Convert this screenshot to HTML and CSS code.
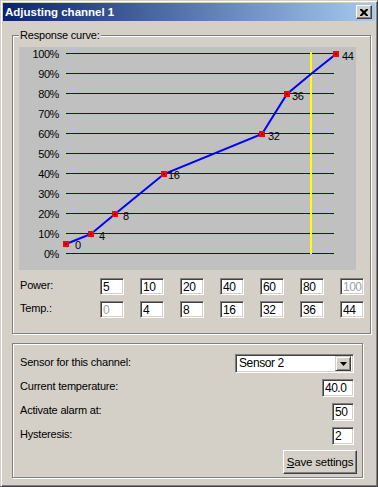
FILE: index.html
```html
<!DOCTYPE html>
<html lang="en">
<head>
  <meta charset="UTF-8">
  <title>Adjusting channel 1</title>
  <link rel="stylesheet" href="styles.css">
</head>
<body>
  <div class="window">
    <div class="titlebar">
      <span class="title">Adjusting channel 1</span>
      <button class="close">
        <svg width="8" height="7" viewBox="0 0 8 7"><path d="M0 0h2l2 2 2-2h2v1l-2.5 2.5 2.5 2.5v1h-2l-2-2-2 2h-2v-1l2.5-2.5-2.5-2.5z" fill="#000"/></svg>
      </button>
    </div>

    <div class="content">
      <fieldset class="group curve-group">
        <legend>Response curve:</legend>

        <svg class="chart" width="337" height="223" viewBox="0 0 337 223">
          <rect width="337" height="223" fill="#c0c0c0"/>
          <g class="grid" stroke="#0000d0" stroke-width="1" shape-rendering="crispEdges">
            <line x1="47" y1="6.5" x2="315" y2="6.5"/>
            <line x1="47" y1="26.5" x2="315" y2="26.5"/>
            <line x1="47" y1="46.5" x2="315" y2="46.5"/>
            <line x1="47" y1="66.5" x2="315" y2="66.5"/>
            <line x1="47" y1="86.5" x2="315" y2="86.5"/>
            <line x1="47" y1="106.5" x2="315" y2="106.5"/>
            <line x1="47" y1="126.5" x2="315" y2="126.5"/>
            <line x1="47" y1="146.5" x2="315" y2="146.5"/>
            <line x1="47" y1="166.5" x2="315" y2="166.5"/>
            <line x1="47" y1="186.5" x2="315" y2="186.5"/>
            <line x1="47" y1="206.5" x2="315" y2="206.5"/>
          </g>
          <g class="axis" text-anchor="end">
            <text x="40" y="11">100%</text>
            <text x="40" y="31">90%</text>
            <text x="40" y="51">80%</text>
            <text x="40" y="71">70%</text>
            <text x="40" y="91">60%</text>
            <text x="40" y="111">50%</text>
            <text x="40" y="131">40%</text>
            <text x="40" y="151">30%</text>
            <text x="40" y="171">20%</text>
            <text x="40" y="191">10%</text>
            <text x="40" y="211">0%</text>
          </g>
          <rect x="291" y="5" width="2" height="202" fill="#ffff00"/>
          <polyline points="47,197 72,187 96,167 145,127 243,87 268,47 292,27 317,7" fill="none" stroke="#0000ff" stroke-width="2"/>
          <g class="marks" fill="#ff0000">
            <rect x="44" y="194" width="6" height="6"/>
            <rect x="69" y="184" width="6" height="6"/>
            <rect x="93" y="164" width="6" height="6"/>
            <rect x="142" y="124" width="6" height="6"/>
            <rect x="240" y="84" width="6" height="6"/>
            <rect x="265" y="44" width="6" height="6"/>
            <rect x="314" y="4" width="6" height="6"/>
          </g>
          <g class="dots" fill="#600000">
            <rect x="46" y="196" width="2" height="2"/>
            <rect x="71" y="186" width="2" height="2"/>
            <rect x="95" y="166" width="2" height="2"/>
            <rect x="144" y="126" width="2" height="2"/>
            <rect x="242" y="86" width="2" height="2"/>
            <rect x="267" y="46" width="2" height="2"/>
            <rect x="316" y="6" width="2" height="2"/>
          </g>
          <g class="values">
            <text x="56" y="202">0</text>
            <text x="80" y="193">4</text>
            <text x="104" y="173">8</text>
            <text x="149" y="132">16</text>
            <text x="249" y="93">32</text>
            <text x="273" y="53">36</text>
            <text x="323" y="13">44</text>
          </g>
        </svg>

        <div class="point-row">
          <span class="row-label">Power:</span>
          <input class="field small" type="text" value="5">
          <input class="field small" type="text" value="10">
          <input class="field small" type="text" value="20">
          <input class="field small" type="text" value="40">
          <input class="field small" type="text" value="60">
          <input class="field small" type="text" value="80">
          <input class="field small last dim" type="text" value="100">
        </div>
        <div class="point-row">
          <span class="row-label">Temp.:</span>
          <input class="field small dim" type="text" value="0">
          <input class="field small" type="text" value="4">
          <input class="field small" type="text" value="8">
          <input class="field small" type="text" value="16">
          <input class="field small" type="text" value="32">
          <input class="field small" type="text" value="36">
          <input class="field small last" type="text" value="44">
        </div>
      </fieldset>

      <div class="group settings-group">
        <div class="setting sensor-row">
          <span class="setting-label">Sensor for this channel:</span>
          <div class="select">
            <span class="select-value">Sensor 2</span>
            <span class="select-btn">
              <svg width="7" height="4" viewBox="0 0 7 4"><path d="M0 0h7l-3.5 4z" fill="#000"/></svg>
            </span>
          </div>
        </div>
        <div class="setting">
          <span class="setting-label">Current temperature:</span>
          <input class="field wide" type="text" value="40.0">
        </div>
        <div class="setting">
          <span class="setting-label">Activate alarm at:</span>
          <input class="field narrow" type="text" value="50">
        </div>
        <div class="setting">
          <span class="setting-label">Hysteresis:</span>
          <input class="field narrow" type="text" value="2">
        </div>
        <div class="actions">
          <button class="save"><u>S</u>ave settings</button>
        </div>
      </div>
    </div>
  </div>
</body>
</html>
```

FILE: styles.css
```css
* {
  box-sizing: border-box;
  margin: 0;
  padding: 0;
}

body {
  width: 378px;
  height: 487px;
  overflow: hidden;
  background: #d4d0c8;
  color: #000;
  font-family: "Liberation Sans", Arial, sans-serif;
  font-size: 11px;
  letter-spacing: -0.2px;
  line-height: 13px;
}

.window {
  width: 378px;
  height: 487px;
  border: 1px solid;
  border-color: #d4d0c8 #404040 #404040 #d4d0c8;
  box-shadow: inset 1px 1px 0 #fff, inset -1px -1px 0 #808080;
  padding: 2px;
}

.titlebar {
  height: 18px;
  display: flex;
  align-items: center;
  justify-content: space-between;
  padding: 0 3px 0 2px;
  background: linear-gradient(to right, #0a246a, #a6caf0);
}

.title {
  color: #fff;
  font-weight: bold;
  font-size: 11.5px;
  letter-spacing: 0;
}

.close {
  width: 16px;
  height: 14px;
  display: flex;
  align-items: center;
  justify-content: center;
  background: #d4d0c8;
  border: 1px solid;
  border-color: #fff #404040 #404040 #fff;
  box-shadow: inset -1px -1px 0 #808080;
}

.content {
  padding: 8px 0 0 9px;
}

.group {
  width: 351px;
  border: 1px solid #808080;
  box-shadow: 1px 1px 0 #fff, inset 1px 1px 0 #fff;
}

.curve-group {
  padding: 5px 6px 15px 6px;
}

.curve-group legend {
  padding: 0 1px;
  background: #d4d0c8;
  line-height: 13px;
}

.chart {
  display: block;
  font-size: 11px;
  letter-spacing: -0.4px;
}

.point-row {
  display: flex;
  align-items: flex-start;
  height: 17px;
  margin-top: 6px;
}

.point-row:first-of-type {
  margin-top: 8px;
}

.row-label {
  width: 81px;
  padding-left: 1px;
  padding-top: 1px;
}

.field {
  height: 18px;
  background: #fff;
  border: 1px solid;
  border-color: #808080 #fff #fff #808080;
  box-shadow: inset 1px 1px 0 #404040, inset -1px -1px 0 #d4d0c8;
  padding: 0 0 0 2px;
  font-family: inherit;
  font-size: 12px;
  letter-spacing: -0.5px;
  color: #000;
  outline: none;
}

.field.small {
  width: 24px;
  height: 17px;
  margin-right: 16px;
}

.field.small.last {
  margin-right: 0;
  margin-left: auto;
}

.field.dim {
  color: #a0a0a0;
}

.field.wide {
  width: 32px;
}

.field.narrow {
  width: 22px;
}

.settings-group {
  margin-top: 9px;
  padding: 10px 8px 3px 7px;
}

.setting {
  display: flex;
  justify-content: space-between;
  align-items: flex-start;
  margin-bottom: 6px;
}

.setting-label {
  padding-top: 1px;
}

.sensor-row .setting-label {
  padding-top: 2px;
}

.select {
  width: 119px;
  height: 19px;
  display: flex;
  align-items: center;
  background: #fff;
  border: 1px solid;
  border-color: #808080 #fff #fff #808080;
  box-shadow: inset 1px 1px 0 #404040, inset -1px -1px 0 #d4d0c8;
  padding: 2px 2px 2px 3px;
}

.select-value {
  flex: 1;
  font-size: 12px;
  letter-spacing: -0.4px;
}

.select-btn {
  width: 16px;
  height: 15px;
  display: flex;
  align-items: center;
  justify-content: center;
  background: #d4d0c8;
  border: 1px solid;
  border-color: #d4d0c8 #404040 #404040 #d4d0c8;
  box-shadow: inset 1px 1px 0 #fff, inset -1px -1px 0 #808080;
}

.setting:nth-child(4) {
  margin-bottom: 5px;
}

.actions {
  display: flex;
  justify-content: flex-end;
  margin-right: -3px;
}

.save {
  width: 74px;
  height: 24px;
  white-space: nowrap;
  background: #d4d0c8;
  border: 1px solid;
  border-color: #fff #404040 #404040 #fff;
  box-shadow: inset -1px -1px 0 #808080;
  font-family: inherit;
  font-size: 11.5px;
  letter-spacing: -0.2px;
  color: #000;
}
```
